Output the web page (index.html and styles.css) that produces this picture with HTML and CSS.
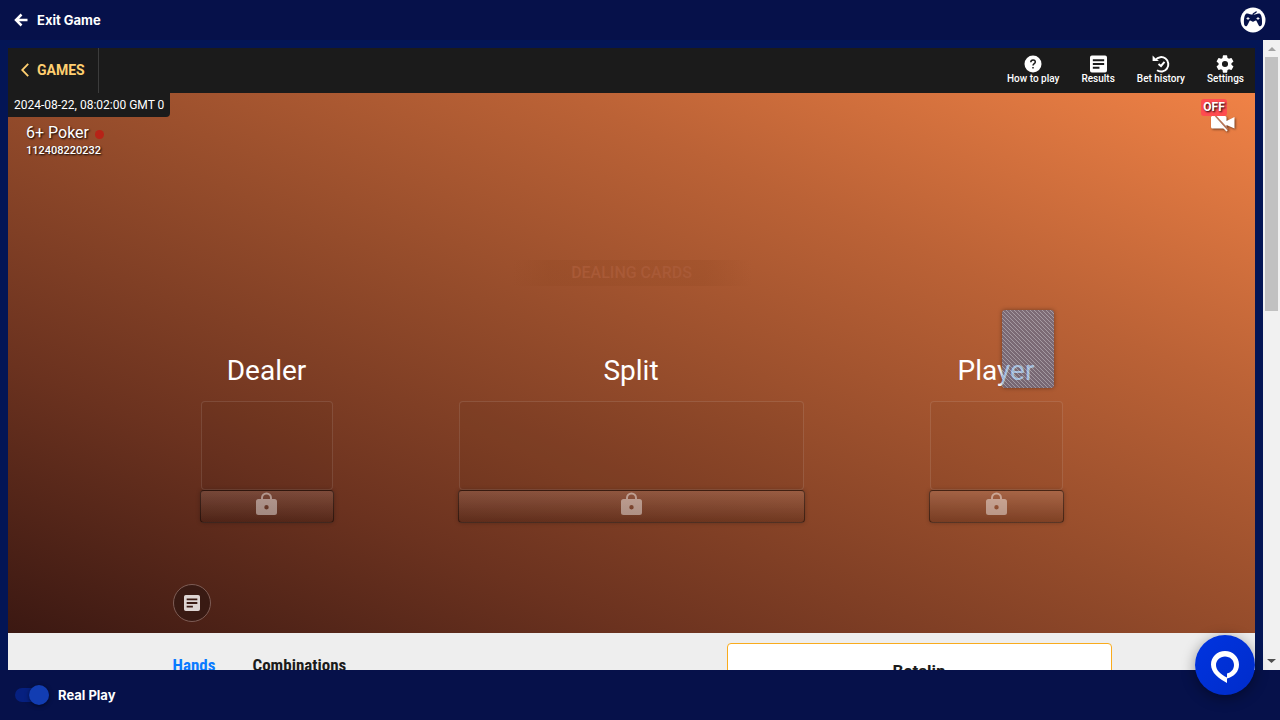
FILE: index.html
```html
<!DOCTYPE html>
<html lang="en">
<head>
<meta charset="utf-8">
<meta name="viewport" content="width=device-width, initial-scale=1">
<title>6+ Poker</title>
<link rel="stylesheet" href="styles.css">
</head>
<body>
<svg class="sprite" aria-hidden="true">
  <symbol id="note" viewBox="0 0 18 18"><path fill-rule="evenodd" d="M2 0h14a2 2 0 0 1 2 2v14a2 2 0 0 1-2 2H2a2 2 0 0 1-2-2V2a2 2 0 0 1 2-2zm1 4v2h12V4zm0 4v2h12V8zm0 4v2h7v-2z"/></symbol>
  <symbol id="lock" viewBox="0 0 21 24"><path fill-rule="evenodd" d="M5 7V6a5.500 5.500 0 0 1 11 0v1h2.500A2.500 2.500 0 0 1 21 9.500v11A2.500 2.500 0 0 1 18.500 23h-16A2.500 2.500 0 0 1 0 20.500v-11A2.500 2.500 0 0 1 2.500 7zm2 0h7V6a3.500 3.500 0 0 0-7 0zm3.500 6a2.200 2.200 0 1 0 0 4.400 2.200 2.200 0 0 0 0-4.400z"/></symbol>
</svg>
<header class="topbar">
  <a class="exit" href="#">
    <svg width="14" height="14" viewBox="0 0 14 14" fill="none" stroke="currentColor" stroke-width="2.500"><path d="M7.500 1.500L2 7L7.500 12.500M2 7H13.500"/></svg>
    Exit Game
  </a>
  <button class="pad" aria-label="Game controls">
    <svg width="26" height="26" viewBox="0 0 26 26"><circle cx="13" cy="13" r="12.500" fill="#fff"/><path fill="#06124a" d="M6.500 6.500c2-.6 4 1.200 6.500 1.200s4.500-1.800 6.500-1.200c2.200.8 2.800 6.500 2.500 10-.2 3.300-2.600 3.500-3.500 1.500L16.500 14c-1-1.300-1.800.8-3.500.8S10.500 12.700 9.500 14l-2 4c-.9 2-3.300 1.800-3.500-1.500-.3-3.500.3-9.200 2.500-10z"/><path d="M13 8c0-2.500 2-1 3.500-3.500" fill="none" stroke="#06124a" stroke-width="1.400"/><path d="M6.500 11.500h3M8 10v3M16.500 11.500h3M18 10v3" stroke="#fff" stroke-width=".9"/></svg>
  </button>
</header>
<main class="frame">
  <div class="game">
    <nav class="menu">
      <a class="games" href="#"><svg width="8" height="14" viewBox="0 0 8 14" fill="none" stroke="currentColor" stroke-width="1.800"><path d="M7.200.8L1.200 7L7.200 13.200"/></svg>GAMES</a>
      <div class="tools">
        <button class="tool"><svg width="18" height="18" viewBox="0 0 18 18"><circle cx="9" cy="9" r="8.500" fill="#fff"/><path d="M6.800 7.200c0-3 4.500-3 4.500-.2C11.300 8.600 9 8.700 9 10.500M9 12v1.500" fill="none" stroke="#1b1b1b" stroke-width="1.500"/></svg>How to play</button>
        <button class="tool"><svg width="17" height="18" fill="#fff"><use href="#note"/></svg>Results</button>
        <button class="tool"><svg width="18" height="18" viewBox="0 0 18 18" fill="none" stroke="#fff" stroke-width="2"><path d="M3.500 4.800A7.200 7.200 0 1 1 5 15.200M6.500 9l2.500 2 3.500-4.200"/><path d="M.6.500L2.600 2.500 4 4 7 6H.6z" fill="#fff" stroke="none"/></svg>Bet history</button>
        <button class="tool"><svg width="18" height="18" viewBox="2 2 20 20" fill="#fff"><path d="M19.140 12.940c.04-.3.060-.610.060-.940s-.02-.64-.07-.94l2.030-1.580a.49.49 0 0 0 .12-.61l-1.920-3.320a.49.49 0 0 0-.59-.22l-2.390.96a7 7 0 0 0-1.620-.94l-.36-2.540a.48.480 0 0 0-.48-.41h-3.840a.48.480 0 0 0-.47.410l-.36 2.540c-.59.24-1.130.57-1.620.94l-2.390-.96a.49.49 0 0 0-.59.220L2.740 8.870a.48.480 0 0 0 .12.610l2.030 1.580a6 6 0 0 0 0 1.880l-2.030 1.580a.49.49 0 0 0-.12.610l1.920 3.320c.12.220.37.290.59.220l2.390-.96c.5.380 1.030.7 1.620.94l.36 2.540c.05.240.24.410.48.410h3.840c.24 0 .44-.17.470-.41l.36-2.540a7 7 0 0 0 1.620-.94l2.390.96c.22.080.47 0 .59-.22l1.920-3.320a.49.49 0 0 0-.12-.61zM12 15.400a3.400 3.400 0 1 1 0-6.800 3.400 3.400 0 0 1 0 6.800z"/></svg>Settings</button>
      </div>
    </nav>
    <section class="stage">
      <time class="clock">2024-08-22, 08:02:00 GMT 0</time>
      <div class="round">
        <h1 class="name">6+ Poker <span class="dot"></span></h1>
        <div class="code">112408220232</div>
      </div>
      <button class="video" aria-label="Video off">
        <svg class="camera" width="26" height="17" viewBox="0 0 26 17"><path fill="#fff" d="M5 1h10a1.500 1.500 0 0 1 1.500 1.500V6L24.500 2v11.500l-8-3.500v2zM2 1h1l11.500 12.500H2.500A1.500 1.500 0 0 1 1 12V2z"/><path d="M5.500 1L18 14.500" stroke="#b87556" stroke-width="1.800"/><path d="M3.500 1L17 16" stroke="#fff" stroke-width="1.800"/></svg>
        <span class="off">OFF</span>
      </button>
      <div class="status">DEALING CARDS</div>
      <div class="bets">
        <div class="bet"><h2 class="side">Dealer</h2><div class="slot"></div><button class="locked" aria-label="Dealer locked"><svg width="21" height="24"><use href="#lock"/></svg></button></div>
        <div class="bet"><h2 class="side">Split</h2><div class="slot"></div><button class="locked" aria-label="Split locked"><svg width="21" height="24"><use href="#lock"/></svg></button></div>
        <div class="bet"><h2 class="side">Player</h2><div class="slot"></div><button class="locked" aria-label="Player locked"><svg width="21" height="24"><use href="#lock"/></svg></button>
          <svg class="card" width="52" height="78" shape-rendering="crispEdges">
            <defs><pattern id="hatch" width="4" height="4" patternUnits="userSpaceOnUse"><rect width="4" height="4" fill="#4175b5" fill-opacity=".5"/><path d="M0 0h1v1H0zM1 1h1v1H1zM2 2h1v1H2zM3 3h1v1H3z" fill="#fff" fill-opacity=".32"/></pattern></defs>
            <rect width="52" height="78" fill="url(#hatch)"/>
          </svg>
        </div>
      </div>
      <div class="wrap"><button class="round-btn" aria-label="Round results"><svg width="16" height="16" fill="#ddd4d2"><use href="#note"/></svg></button></div>
    </section>
    <section class="panel">
      <div class="wrap columns">
        <div class="tabs"><a class="tab active" href="#">Hands</a><a class="tab" href="#">Combinations</a></div>
        <aside class="slip">Betslip</aside>
      </div>
    </section>
  </div>
  <div class="scroll" aria-hidden="true">
    <svg width="17" height="17"><path d="M5 11l4-4 4 4z" fill="#a3a3a3"/></svg>
    <div class="thumb"></div>
    <svg class="down" width="17" height="17"><path d="M4 6h9l-4.500 4z" fill="#505050"/></svg>
  </div>
</main>
<footer class="bottom">
  <label class="play"><input class="switch" type="checkbox" role="switch" checked>Real Play</label>
</footer>
<button class="chat" aria-label="Chat">
  <svg width="60" height="60" viewBox="0 0 60 60"><path fill="#fff" fill-rule="evenodd" d="M30 16c8 0 14 6 14 13.500 0 7.500-5 12-12 14V48C24 43.500 16 38 16 29.500 16 22 22 16 30 16zm0 5.500c-5 0-9 4-9 8.500 0 5 4 9 11 12.500V38.500c4-1 7-4 7-8.500 0-5-4-8.500-9-8.500z"/></svg>
</button>
</body>
</html>
```
FILE: styles.css
```css
* { box-sizing: border-box; }
body {
  margin: 0;
  height: 100vh;
  display: flex;
  flex-direction: column;
  overflow: hidden;
  background: #06114a;
  color: #fff;
  font-family: Roboto, "Liberation Sans", sans-serif;
}
button { margin: 0; padding: 0; border: 0; background: none; color: inherit; font: inherit; }
a { color: inherit; text-decoration: none; }
h1, h2 { margin: 0; font-weight: 400; }
svg { display: block; }
.sprite { position: absolute; width: 0; height: 0; }
.topbar {
  flex: none;
  height: 40px;
  padding: 0 14px;
  display: flex;
  align-items: center;
  justify-content: space-between;
}
.exit { display: flex; align-items: center; gap: 9px; }
.exit, .play { font: 700 13px/20px Inter, sans-serif; }
.frame {
  flex: 1;
  min-height: 0;
  display: flex;
  overflow: hidden;
  background: #031555;
}
.game { flex: 1; min-width: 0; padding: 8px 8px 0; }
.menu {
  height: 45px;
  display: flex;
  justify-content: space-between;
  background: #1b1b1b;
}
.games {
  display: flex;
  align-items: center;
  gap: 8px;
  padding: 0 13px 1px;
  border-right: 1px solid #3c3c3c;
  color: #ffcf70;
  font-size: 14px;
  font-weight: 700;
}
.tools { display: flex; gap: 22px; padding-right: 11px; }
.tool {
  height: 37px;
  display: flex;
  flex-direction: column;
  align-items: center;
  justify-content: flex-end;
  font-size: 10px;
  line-height: 12px;
  font-weight: 500;
}
.stage {
  position: relative;
  display: flex;
  flex-direction: column;
  align-items: center;
  padding-bottom: 11px;
  background: linear-gradient(to top right, #3b1812, #6b321f 25%, #954c2b 50%, #bb6236 72%, #f08246);
}
.clock {
  align-self: flex-start;
  padding: 0 6px;
  background: #1b1b1b;
  border-bottom-right-radius: 4px;
  font-size: 12px;
  line-height: 24px;
}
.round { align-self: flex-start; padding: 5px 18px 0; text-shadow: 1px 1px 2px #000; }
.name { display: flex; align-items: center; gap: 6px; font-size: 16px; line-height: 22px; }
.dot { width: 9px; height: 9px; margin-top: 3px; border-radius: 50%; background: #b72317; }
.code { font-size: 11px; line-height: 14px; font-weight: 500; }
.video { position: absolute; top: 6px; right: 19px; width: 35px; height: 34px; }
.off {
  position: absolute;
  left: 0;
  top: 0;
  width: 26px;
  border-radius: 3px;
  background: #ff4c50;
  font-size: 12px;
  line-height: 17px;
  font-weight: 700;
  text-shadow: 1px 1px 2px #000;
}
.camera { position: absolute; left: 9px; top: 16px; filter: drop-shadow(1px 1px 1px #0008); }
.status {
  width: 240px;
  margin-top: 102px;
  background: linear-gradient(to right, transparent, #8d451f38 15%, #8d451f38 80%, transparent);
  color: #a95a37;
  font-size: 16px;
  line-height: 26px;
  font-weight: 500;
  text-align: center;
}
.bets {
  width: 100%;
  max-width: 864px;
  margin-top: 68px;
  display: grid;
  grid-template-columns: 134fr 347fr 135fr;
  gap: 124px;
}
.bet { position: relative; display: flex; flex-direction: column; }
.side { font-size: 28px; line-height: 34px; text-align: center; }
.slot {
  height: 89px;
  margin: 13px 1px 0;
  border: 1px solid #ffffff1c;
  border-radius: 4px;
  background: #00000008;
}
.locked {
  height: 33px;
  padding-bottom: 5px;
  display: flex;
  align-items: center;
  justify-content: center;
  border: 1px solid #00000073;
  border-radius: 4px;
  background: linear-gradient(#ffffff1f, #0000002b);
  box-shadow: 0 0 4px #00000040;
  fill: #ffffff70;
}
.card {
  position: absolute;
  left: 73px;
  top: -44px;
  border-radius: 3px;
  box-shadow: 0 0 4px #00000060;
}
.wrap { width: 100%; max-width: 960px; margin: 0 auto; padding-left: 21px; }
.round-btn {
  width: 38px;
  height: 38px;
  margin-top: 61px;
  display: grid;
  place-items: center;
  border: 1px solid #7d5c55;
  border-radius: 50%;
  background: #391a13;
}
.panel { height: 540px; padding-top: 10px; background: #eee; color: #1b1b1b; }
.columns { display: flex; justify-content: space-between; }
.tabs {
  display: flex;
  gap: 37px;
  padding-top: 12px;
  font: 700 17px/20px "Roboto Condensed", "Liberation Sans Narrow", Roboto, sans-serif;
}
.active { color: #0a7bff; }
.slip {
  width: 41%;
  height: 420px;
  padding-top: 16px;
  border: 1px solid #f9ab1d;
  border-radius: 4px;
  background: #fff;
  font-size: 17px;
  line-height: 22px;
  font-weight: 700;
  text-align: center;
}
.scroll { width: 17px; display: flex; flex-direction: column; background: #f1f1f1; }
.thumb { height: 254px; margin: 0 2px; background: #c1c1c1; }
.down { margin-top: auto; }
.bottom { flex: none; height: 50px; display: flex; align-items: center; padding: 0 15px; }
.play { display: flex; align-items: center; gap: 9px; }
.switch {
  appearance: none;
  width: 34px;
  height: 14px;
  margin: 0;
  display: flex;
  align-items: center;
  justify-content: flex-end;
  border-radius: 7px;
  background: #062080;
}
.switch::before {
  content: "";
  flex: none;
  width: 20px;
  height: 20px;
  border-radius: 50%;
  background: #123db2;
  box-shadow: 0 1px 4px #0008;
}
.chat {
  position: fixed;
  right: 25px;
  bottom: 25px;
  border-radius: 50%;
  background: linear-gradient(135deg, #0034e0, #002cca);
  box-shadow: 0 3px 14px #0006;
}
```
